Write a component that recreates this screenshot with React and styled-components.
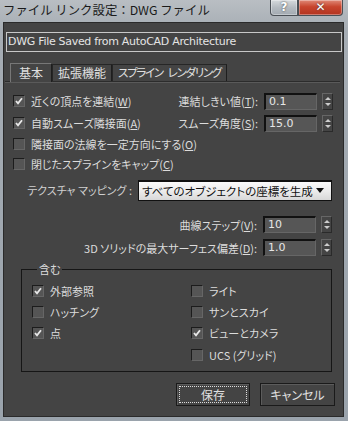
import React from "react";
import styled, {createGlobalStyle} from "styled-components";

const GlobalStyle = createGlobalStyle`
    html, body{
        margin: 0;
        padding: 0;
        background: #444;
    }
    *{
        box-sizing: border-box;
    }
`

const FONT = `"Noto Sans CJK JP", "Noto Sans", "Liberation Sans", sans-serif`;

const Window = styled.div`
    width: 348px;
    height: 421px;
    background: linear-gradient(180deg, #b9bec3 0px, #a6adb4 30px, #9aa3ac 100%);
    display: flex;
    flex-direction: column;
    font-family: ${FONT};
    font-feature-settings: "palt";
    overflow: hidden;
`

const TitleBar = styled.div`
    height: 22px;
    display: flex;
    align-items: flex-start;
    padding: 0 5px 0 3px;
    .title{
        flex: 1;
        font-size: 12.4px;
        font-feature-settings: normal;
        line-height: 20px;
        color: #1a1a1a;
        white-space: nowrap;
    }
`

const CaptionButton = styled.div`
    height: 16px;
    width: ${({wide}) => wide ? 45 : 28}px;
    border: 1px solid #4a4f55;
    border-top: none;
    border-radius: ${({wide}) => wide ? "0 0 4px 0" : "0 0 0 4px"};
    background: ${({wide}) => wide
        ? "linear-gradient(180deg, #e08a78 0%, #c8452e 45%, #b2331f 100%)"
        : "linear-gradient(180deg, #d6dadd 0%, #b5bbc1 50%, #a3aab1 100%)"};
    color: #fff;
    font-family: "DejaVu Sans", sans-serif;
    font-weight: bold;
    font-size: 12px;
    line-height: 15px;
    text-align: center;
    text-shadow: 0 0 2px #333;
    box-shadow: inset 0 0 0 1px rgba(255,255,255,0.35);
`

const Client = styled.div`
    flex: 1;
    margin: 0 4px 4px 3px;
    background: #444;
    border: 1px solid #2a2a2a;
    display: flex;
    flex-direction: column;
    color: #dcdcdc;
    font-size: 11px;
`

const NameField = styled.div`
    margin: 9px 1px 0 2px;
    height: 20px;
    border: 1px solid #c8c8c8;
    font-size: 11px;
    line-height: 18px;
    padding-left: 1px;
    color: #e4e4e4;
    font-family: "DejaVu Sans", ${FONT};
    letter-spacing: -0.3px;
`

const TabStrip = styled.div`
    margin: 10px 3px 0 1px;
    height: 20px;
    display: flex;
    align-items: flex-end;
    padding-left: 5px;
    border-bottom: 1px solid #2c2c2c;
    box-shadow: 0 1px 0 #5a5a5a;
`

const Tab = styled.div`
    height: ${({active}) => active ? 19 : 17}px;
    padding: 0 ${({active}) => active ? 8 : 5}px;
    border: 1px solid ${({active}) => active ? "#777" : "#262626"};
    border-bottom: none;
    border-right-color: #1e1e1e;
    font-size: ${({narrow}) => narrow ? 11.5 : 12}px;
    letter-spacing: ${({narrow}) => narrow ? -1.3 : 0}px;
    line-height: ${({active}) => active ? 17 : 15}px;
    color: #e0e0e0;
    white-space: nowrap;
    margin-bottom: ${({active}) => active ? -1 : 0}px;
    background: #444;
    .sp{
        display: inline-block;
        width: 5px;
    }
`

const Body = styled.div`
    padding: 8px 10px 0 9px;
    display: flex;
    flex-direction: column;
`

const Row = styled.div`
    height: ${({h}) => h || 21}px;
    display: flex;
    align-items: center;
    justify-content: space-between;
`

const Check = styled.label`
    display: flex;
    align-items: center;
    gap: 6px;
    white-space: nowrap;
    font-size: 11px;
    color: #dcdcdc;
`

const Box = styled.span`
    width: 12px;
    height: 12px;
    flex: none;
    background: #555;
    border: 1px solid #1c1c1c;
    border-right-color: #666;
    border-bottom-color: #666;
    display: flex;
    align-items: center;
    justify-content: center;
    svg{
        display: block;
    }
`

const Spinner = styled.div`
    display: flex;
    align-items: center;
    gap: 3px;
    .label{
        font-size: 11px;
        margin-right: 3px;
        white-space: nowrap;
    }
`

const NumField = styled.div`
    width: 53px;
    height: 17px;
    background: #565656;
    border: 1px solid #666;
    border-top: 2px solid #111;
    border-left: 2px solid #111;
    font-family: "DejaVu Sans", sans-serif;
    font-size: 11px;
    line-height: 14px;
    padding-left: 3px;
    color: #e6e6e6;
`

const Arrows = styled.div`
    width: 11px;
    height: 17px;
    margin-left: 2px;
    border: 1px solid #2a2a2a;
    border-left-color: #666;
    border-top-color: #666;
    display: flex;
    flex-direction: column;
    align-items: center;
    justify-content: space-evenly;
    span{
        width: 0;
        height: 0;
        border-left: 3px solid transparent;
        border-right: 3px solid transparent;
    }
    .up{ border-bottom: 3px solid #ccc; }
    .down{ border-top: 3px solid #ccc; }
`

const Underline = styled.span`
    text-decoration: underline;
`

const MappingRow = styled.div`
    margin-top: 5px;
    height: 22px;
    display: grid;
    grid-template-columns: 1fr 194px;
    column-gap: 6px;
    align-items: center;
    padding-right: 1px;
    .label{
        font-size: 11px;
        color: #d0d0d0;
        white-space: nowrap;
        text-align: right;
    }
`

const Dropdown = styled.div`
    width: 194px;
    height: 21px;
    border: 1px solid #111;
    border-top-width: 2px;
    background: linear-gradient(180deg, #fafafa 0%, #ececec 50%, #d8d8d8 100%);
    color: #111;
    font-size: 11.5px;
    display: flex;
    align-items: center;
    justify-content: space-between;
    padding: 0 7px 0 3px;
    white-space: nowrap;
    overflow: hidden;
    .tri{
        flex: none;
        width: 0;
        height: 0;
        border-left: 4px solid transparent;
        border-right: 4px solid transparent;
        border-top: 5px solid #111;
    }
`

const RightRow = styled.div`
    height: 23px;
    display: flex;
    align-items: center;
    justify-content: flex-end;
    padding-right: 1px;
    margin-top: ${({gap}) => gap || 0}px;
`

const Group = styled.fieldset`
    margin: 2px 1px 0 8px;
    padding: 3px 10px 5px 10px;
    min-inline-size: 0;
    border: 1px solid #161616;
    display: grid;
    grid-template-columns: 159px 1fr;
    grid-auto-rows: 21.4px;
    align-items: center;
    legend{
        padding: 0 2px;
        margin-left: 5px;
        font-size: 11px;
        color: #dcdcdc;
    }
`

const Footer = styled.div`
    margin-top: 11px;
    margin-right: -2px;
    display: flex;
    justify-content: flex-end;
    gap: 10px;
`

const Button = styled.div`
    width: ${({w}) => w}px;
    height: 23px;
    border: 1px solid #1a1a1a;
    box-shadow: inset 1px 1px 0 #5c5c5c;
    display: flex;
    align-items: center;
    justify-content: center;
    font-size: 12px;
    color: #e0e0e0;
    position: relative;
    &.focus::after{
        content: "";
        position: absolute;
        inset: 2px;
        border: 1px dotted #ddd;
    }
`

function CheckMark(){
    return (
        <svg width="8" height="8" viewBox="0 0 8 8">
            <path d="M1 4 L3 6.3 L7 1.2" fill="none" stroke="#e8e8e8" strokeWidth="1.8"/>
        </svg>
    )
}

function CheckItem({checked, children}){
    return (
        <Check>
            <Box>{checked && <CheckMark/>}</Box>
            <span>{children}</span>
        </Check>
    )
}

function SpinField({label, hot, value}){
    return (
        <Spinner>
            <span className="label">{label}(<Underline>{hot}</Underline>):</span>
            <NumField>{value}</NumField>
            <Arrows><span className="up"/><span className="down"/></Arrows>
        </Spinner>
    )
}

export default function App(){
    return (
        <>
            <GlobalStyle/>
            <Window>
                <TitleBar>
                    <div className="title">ファイル リンク設定：DWG ファイル</div>
                    <CaptionButton>?</CaptionButton>
                    <CaptionButton wide>✕</CaptionButton>
                </TitleBar>
                <Client>
                    <NameField>DWG File Saved from AutoCAD Architecture</NameField>
                    <TabStrip>
                        <Tab active>基本</Tab>
                        <Tab>拡張機能</Tab>
                        <Tab narrow>スプライン<span className="sp"> </span>レンダリング</Tab>
                    </TabStrip>
                    <Body>
                        <Row h={22}>
                            <CheckItem checked>近くの頂点を連結(<Underline>W</Underline>)</CheckItem>
                            <SpinField label="連結しきい値" hot="T" value="0.1"/>
                        </Row>
                        <Row h={22}>
                            <CheckItem checked>自動スムーズ隣接面(<Underline>A</Underline>)</CheckItem>
                            <SpinField label="スムーズ角度" hot="S" value="15.0"/>
                        </Row>
                        <Row h={20}>
                            <CheckItem>隣接面の法線を一定方向にする(<Underline>O</Underline>)</CheckItem>
                        </Row>
                        <Row h={20}>
                            <CheckItem>閉じたスプラインをキャップ(<Underline>C</Underline>)</CheckItem>
                        </Row>
                        <MappingRow>
                            <span className="label">テクスチャ マッピング :</span>
                            <Dropdown>
                                <span>すべてのオブジェクトの座標を生成</span>
                                <span className="tri"/>
                            </Dropdown>
                        </MappingRow>
                        <RightRow gap={12}>
                            <SpinField label="曲線ステップ" hot="V" value="10"/>
                        </RightRow>
                        <RightRow>
                            <SpinField label="3D ソリッドの最大サーフェス偏差" hot="D" value="1.0"/>
                        </RightRow>
                        <Group>
                            <legend>含む</legend>
                            <CheckItem checked>外部参照</CheckItem>
                            <CheckItem>ライト</CheckItem>
                            <CheckItem>ハッチング</CheckItem>
                            <CheckItem>サンとスカイ</CheckItem>
                            <CheckItem checked>点</CheckItem>
                            <CheckItem checked>ビューとカメラ</CheckItem>
                            <span/>
                            <CheckItem>UCS (グリッド)</CheckItem>
                        </Group>
                        <Footer>
                            <Button w={74} className="focus">保存</Button>
                            <Button w={75}>キャンセル</Button>
                        </Footer>
                    </Body>
                </Client>
            </Window>
        </>
    )
}
